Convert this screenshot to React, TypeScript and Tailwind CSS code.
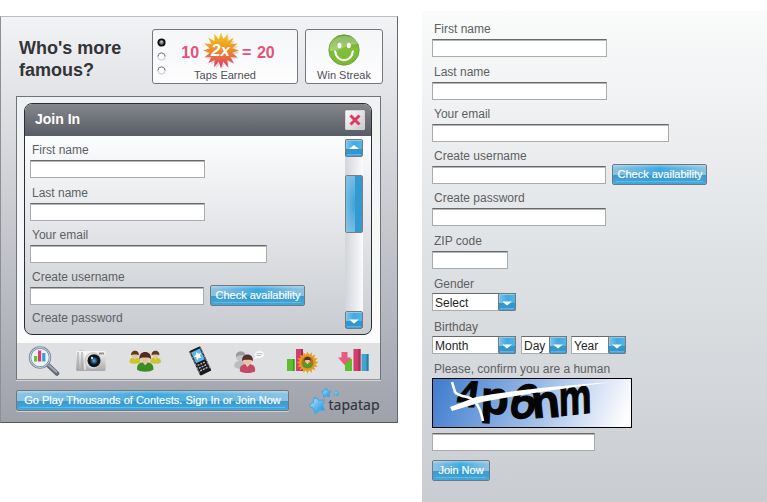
import React from "react";

const LABEL = "pl-[2px] h-[14px] text-[12px] leading-[14px] text-[#5e5f62] whitespace-nowrap";
const INPUT =
  "block h-[18px] bg-white border border-[#aaabad] border-t-[#68696c] outline-none rounded-none px-1 text-[12px] shadow-[inset_0_1px_0_#b5b6b8]";

function Field({
  label,
  width,
  className = "",
  action,
}: {
  label: string;
  width: string;
  className?: string;
  action?: string;
}) {
  return (
    <div className={`flex flex-col gap-[3px] ${className}`}>
      <div className={LABEL}>{label}</div>
      <div className="flex h-[18px] items-start gap-[6px]">
        <input className={`${INPUT} ${width}`} />
        {action && <BlueButton className="-mt-[2px] w-[95px] pl-px">{action}</BlueButton>}
      </div>
    </div>
  );
}

function BlueButton({ children, className = "" }: { children: React.ReactNode; className?: string }) {
  return (
    <button
      className={`relative flex h-[21px] shrink-0 items-center justify-center overflow-hidden rounded-[2px] border border-[#72777d] bg-linear-to-r from-[#8cc4e2] via-[#3aa9e0] to-[#8cc4e2] text-[11px] leading-[13px] whitespace-nowrap text-white ${className}`}
    >
      <span className="absolute inset-x-0 bottom-0 h-[9px] bg-linear-to-b from-[#3494ca]/90 to-[#39a7de]/90" />
      <span className="absolute inset-x-0 top-0 h-[3px] bg-linear-to-b from-white/35 to-white/0" />
      <span className="absolute inset-x-[3px] bottom-[2px] h-px bg-[#63b9e4]" />
      <span className="relative [-webkit-text-stroke:0.15px_#fff]">{children}</span>
    </button>
  );
}

function ArrowButton({ up = false }: { up?: boolean }) {
  return (
    <svg width="18" height="18" viewBox="0 0 18 18" className="block shrink-0">
      <defs>
        <linearGradient id="arrowFill" x1="0" y1="0" x2="1" y2="0">
          <stop offset="0" stopColor="#83c3e6" />
          <stop offset=".5" stopColor="#3eabe1" />
          <stop offset="1" stopColor="#58b4e2" />
        </linearGradient>
      </defs>
      <rect x=".5" y=".5" width="17" height="17" rx="1.5" fill="url(#arrowFill)" stroke="#75797e" />
      <path d="M1.5 15V1.5H16.5" fill="none" stroke="#8ecbea" />
      <rect x="1" y="10" width="16" height="7" fill="#3297ce" />
      <rect x="2" y="15" width="14" height="1.5" fill="#59b4e2" />
      <path d={up ? "M4 10L9 6L14 10Z" : "M4 8.500H14L9 12.500Z"} fill="#fff" />
    </svg>
  );
}

function Dropdown({ value, width }: { value: string; width: string }) {
  return (
    <div
      className={`flex h-[18px] items-center border border-r-0 border-[#aaabad] border-t-[#68696c] bg-white pl-[2px] text-[12px] leading-[14px] text-[#242424] ${width}`}
    >
      <span className="flex-1 pt-px whitespace-nowrap">{value}</span>
      <ArrowButton />
    </div>
  );
}

function burst(cx: number, cy: number, outer: number, inner: number, spikes: number, turn = 0) {
  return Array.from({ length: spikes * 2 }, (_, i) => {
    const a = (Math.PI * i) / spikes - Math.PI / 2 + turn;
    const r = i % 2 ? inner : outer;
    return `${(cx + r * Math.cos(a)).toFixed(2)},${(cy + r * Math.sin(a)).toFixed(2)}`;
  }).join(" ");
}

function MultiplierBurst() {
  return (
    <svg width="38" height="38" viewBox="0 0 38 38" className="block shrink-0">
      <defs>
        <linearGradient id="burstFill" x1="0" y1="0" x2="0" y2="1">
          <stop offset="0" stopColor="#f4cf17" />
          <stop offset=".5" stopColor="#f08a28" />
          <stop offset="1" stopColor="#dc3570" />
        </linearGradient>
      </defs>
      <polygon points={burst(20.5, 20.5, 17, 11, 16)} fill="#777" opacity=".25" />
      <polygon points={burst(19, 18.5, 18, 11.5, 16)} fill="url(#burstFill)" />
      <text x="18.5" y="24" textAnchor="middle" fontSize="17" fontWeight="700" fontStyle="italic" fill="#fff">
        2x
      </text>
    </svg>
  );
}

function Smiley() {
  return (
    <svg width="32" height="32" viewBox="0 0 32 32" className="block">
      <defs>
        <linearGradient id="smile" x1="0" y1="0" x2="0" y2="1">
          <stop offset="0" stopColor="#5f9c2a" />
          <stop offset=".45" stopColor="#83be3a" />
          <stop offset="1" stopColor="#7ab932" />
        </linearGradient>
      </defs>
      <circle cx="16" cy="16" r="15.200" fill="url(#smile)" stroke="#669e3a" strokeWidth=".8" />
      <path d="M1.500 17C1.500 7 8 2 16 2S29 5 30 10C21 10 10 18 1.500 17Z" fill="#fff" opacity=".28" />
      <ellipse cx="11.500" cy="11.500" rx="2" ry="2.800" fill="#fff" />
      <ellipse cx="20.800" cy="11.500" rx="2" ry="2.800" fill="#fff" />
      <path d="M7.200 17.500C8.500 29 23.500 29 24.800 17.500" fill="none" stroke="#fff" strokeWidth="2.200" strokeLinecap="round" />
    </svg>
  );
}

function RadioDot({ on = false }: { on?: boolean }) {
  return (
    <svg width="9" height="9" viewBox="0 0 9 9" className="block">
      {on ? (
        <>
          <circle cx="4.500" cy="4.500" r="3.200" fill="#777" stroke="#0c0c0c" strokeWidth="1.800" />
          <circle cx="4.500" cy="3.800" r="1.200" fill="#bbb" />
        </>
      ) : (
        <>
          <circle cx="4.500" cy="4.500" r="3.600" fill="#fff" stroke="#c4c4cb" />
          <path d="M.9 4.500A3.600 3.600 0 0 1 8.100 4.500" fill="none" stroke="#7d7d88" />
        </>
      )}
    </svg>
  );
}

function Icon({ children }: { children: React.ReactNode }) {
  return (
    <svg width="32" height="32" viewBox="0 0 32 32" className="block shrink-0">
      {children}
    </svg>
  );
}

function SearchChartIcon() {
  return (
    <Icon>
      <path d="M20 19L29 27.500" stroke="#666b76" strokeWidth="4.500" strokeLinecap="round" />
      <path d="M20 18.500L28.500 26" stroke="#a3a9b3" strokeWidth="1.700" strokeLinecap="round" />
      <circle cx="12" cy="11.500" r="10" fill="#e9f4fa" stroke="#7c8896" strokeWidth="2.400" />
      <circle cx="12" cy="11.500" r="10" fill="none" stroke="#c0d4df" strokeWidth="1" />
      <rect x="6" y="10" width="3.200" height="5.500" fill="#65c436" />
      <rect x="10" y="4.500" width="3.200" height="11" fill="#dd3a72" />
      <rect x="14.200" y="7" width="3.200" height="8.500" fill="#399fce" />
    </Icon>
  );
}

function CameraIcon() {
  return (
    <Icon>
      <defs>
        <linearGradient id="camBody" x1="0" y1="0" x2="0" y2="1">
          <stop offset="0" stopColor="#f7f7f7" />
          <stop offset="1" stopColor="#a9a9a9" />
        </linearGradient>
        <radialGradient id="lens">
          <stop offset="0" stopColor="#6fb4dd" />
          <stop offset=".4" stopColor="#1e5078" />
          <stop offset=".65" stopColor="#0a0d13" />
          <stop offset="1" stopColor="#17191e" />
        </radialGradient>
      </defs>
      <rect x="3" y="3.500" width="5" height="3" fill="#d2d2d2" />
      <rect x="0" y="5" width="29.500" height="20" rx="1.500" fill="url(#camBody)" />
      <path d="M2 6V24M6 6V24" stroke="#a0a0a0" strokeWidth="1" />
      <path d="M9 6V24" stroke="#fff" />
      <rect x="23" y="6.500" width="5" height="2" fill="#99928a" />
      <circle cx="17" cy="14.700" r="8" fill="#ddd" stroke="#c5c5c5" />
      <circle cx="18" cy="14.700" r="6.500" fill="url(#lens)" />
      <circle cx="16" cy="12" r="1.200" fill="#bfd9e8" />
    </Icon>
  );
}

function Person({ x, y, s, hair, shirt }: { x: number; y: number; s: number; hair: string; shirt: string }) {
  return (
    <g transform={`translate(${x} ${y}) scale(${s})`}>
      <path d="M-8 17C-8.500 11-5 9.500 0 9.500S8.500 11 8 17C5 19.500-5 19.500-8 17Z" fill={shirt} />
      <path d="M-3 9L0 12.500L3 9Z" fill="#f3d1ad" />
      <ellipse cx="0" cy="5.500" rx="4.500" ry="4.800" fill="#e9c3a2" />
      <path d="M-5.500 6.800C-7.500-3 7.500-3 5.500 6.800C5 5 3 5 0 5S-5 5-5.500 6.800Z" fill={hair} />
    </g>
  );
}

function PeopleIcon() {
  return (
    <Icon>
      <Person x={6} y={5} s={0.68} hair="#62391c" shirt="#c9c72b" />
      <Person x={26.500} y={5} s={0.68} hair="#62391c" shirt="#c9c72b" />
      <Person x={16.200} y={6.500} s={1.02} hair="#532b25" shirt="#3c8d25" />
    </Icon>
  );
}

function PhoneIcon() {
  return (
    <Icon>
      <g transform="rotate(-25 16 15)">
        <rect x="10" y="1.500" width="12.500" height="27" rx="1.500" fill="#17191d" />
        <path d="M10.500 3V27M22 3V27" stroke="#a9a9ac" strokeWidth=".8" strokeDasharray="3 1" />
        <rect x="11.500" y="3.500" width="9.500" height="12" fill="#62b6e7" />
        <polygon points={burst(16.200, 9.500, 4.300, 2.100, 5)} fill="#fff" />
        <path d="M12 18H20.500M12 21H20.500M12 24H20.500" stroke="#b9b9bb" strokeWidth="1.400" strokeDasharray="2 1" />
      </g>
    </Icon>
  );
}

function ChatIcon() {
  return (
    <Icon>
      <ellipse cx="6.500" cy="10.500" rx="4.500" ry="5" fill="#c3c4c5" />
      <path d="M.5 21C-.5 16 3 15 7 15S12 17 12 22C8 24 3 23 .5 21Z" fill="#bbbcbe" />
      <path d="M2 11C1 4 12 4 11.500 10C8 9 5 9 2 11Z" fill="#9a9b9d" />
      <Person x={13.500} y={9} s={0.95} hair="#55302b" shirt="#c54866" />
      <ellipse cx="25.500" cy="8.500" rx="4.700" ry="3.600" fill="#f8f8f8" />
      <path d="M22 10.500L19.500 13L25 12Z" fill="#f8f8f8" />
      <path d="M22.500 7.700H28.500M22.500 9.500H27" stroke="#b0b0b0" strokeWidth=".8" />
    </Icon>
  );
}

function FameChartIcon() {
  return (
    <Icon>
      <rect x="0" y="13" width="7.500" height="12" fill="#5cc02a" />
      <path d="M6 13H7.500V25H6Z" fill="#3f961d" />
      <rect x="9" y="3" width="7" height="22" fill="#d23d6c" />
      <path d="M14 3H16V25H14Z" fill="#a72e55" />
      <polygon points={burst(20.5, 16.5, 11, 7.8, 16)} fill="#e59b20" />
      <circle cx="20.500" cy="16.500" r="6" fill="#ad6f22" />
      <Person x={20.500} y={11} s={0.58} hair="#55351e" shirt="#4d9e2b" />
    </Icon>
  );
}

function RankingIcon() {
  return (
    <Icon>
      <rect x="7" y="13" width="7" height="12" fill="#5cc02a" />
      <rect x="15.500" y="3" width="7" height="22" fill="#d23d6c" />
      <path d="M20.500 3H22.500V25H20.500Z" fill="#a72e55" />
      <rect x="23.500" y="8" width="7" height="17" fill="#3fa6d0" />
      <path d="M28.500 8H30.500V25H28.500Z" fill="#2b7ea3" />
      <path d="M3.500 6H9.500V11.500H13.500L6.500 19L0 11.500H3.500Z" fill="#ec5a80" />
    </Icon>
  );
}

function Logo() {
  return (
    <svg width="74" height="30" viewBox="0 0 74 30" className="block shrink-0">
      <defs>
        <linearGradient id="star" x1="0" y1="0" x2="1" y2="1">
          <stop offset="0" stopColor="#e1f3fd" />
          <stop offset=".45" stopColor="#6cbff0" />
          <stop offset="1" stopColor="#1f86d2" />
        </linearGradient>
      </defs>
      <g fill="url(#star)" stroke="#4fa8e0" strokeLinejoin="round" strokeWidth="1.200">
        <polygon points={burst(8.5, 18.3, 8.8, 5.2, 5, -0.35)} />
        <polygon points={burst(17.3, 6, 5, 2.9, 5, -0.05)} />
        <polygon points={burst(27.3, 6.5, 2.7, 1.6, 5, 0.25)} strokeWidth=".8" />
      </g>
      <text
        x="19.500"
        y="23"
        fontFamily="'Noto Sans', 'Open Sans', sans-serif"
        fontSize="14"
        fontWeight="400"
        fill="#333539"
        stroke="#333539"
        strokeWidth=".15"
        textLength="51"
      >
        tapatap
      </text>
    </svg>
  );
}

function Captcha() {
  return (
    <svg width="200" height="50" viewBox="0 0 200 50" className="block overflow-visible">
      <defs>
        <linearGradient id="captchaBg" x1="0" y1=".4" x2="1" y2=".5">
          <stop offset="0" stopColor="#4480cf" />
          <stop offset=".55" stopColor="#a1bfe8" />
          <stop offset="1" stopColor="#fdfdff" />
        </linearGradient>
      </defs>
      <rect x=".5" y=".5" width="199" height="49" fill="url(#captchaBg)" stroke="#000" />
      <g
        fill="#050505"
        stroke="#050505"
        strokeWidth="1.200"
        fontFamily="'Liberation Sans', Arial, sans-serif"
        fontWeight="700"
      >
        <text transform="translate(24 29) skewX(-8) scale(1.050 1)" fontSize="37">4</text>
        <text transform="translate(48 35) rotate(3)" fontSize="46">p</text>
        <text transform="translate(75 39) rotate(2) skewX(-12)" fontSize="47" fontWeight="400" strokeWidth="2.500">6</text>
        <text transform="translate(101 40) rotate(-3) skewX(3)" fontSize="46">n</text>
        <text transform="translate(127 38) rotate(-6) skewX(-5) scale(.74 1)" fontSize="50">m</text>
      </g>
      <path d="M18 29L44 19Q92 10 181 4Q108 13 50 24L20 33Z" fill="#fff" />
      <path d="M20 4L23 14Q25 17 35 19Q47 22 51 43" fill="none" stroke="#fff" strokeWidth="2.600" />
    </svg>
  );
}

function Dialog() {
  return (
    <div className="flex h-[232px] w-[348px] flex-col overflow-hidden rounded-[8px] border border-[#2d2e32] bg-linear-to-b from-[#fbfcfd] from-15% to-[#c8cbd0]">
      <div className="flex h-[32px] shrink-0 items-center justify-between bg-linear-to-b from-[#85878b] to-[#575d65] pr-[6px] pb-[2px] pl-[10px]">
        <span className="text-[14px] leading-[16px] font-bold text-white">Join In</span>
        <button className="mt-px flex size-[20px] items-center justify-center rounded-[1px] border border-[#d3d4d7] bg-linear-to-br from-[#fcfcfc] to-[#c9cacc]">
          <svg width="12" height="12" viewBox="0 0 12 12" className="shrink-0">
            <path d="M1.500 1.500L10.500 10.500M10.500 1.500L1.500 10.500" stroke="#de3a68" strokeWidth="3" />
          </svg>
        </button>
      </div>
      <div className="flex min-h-0 flex-1 justify-between pr-[8px] pl-[5px]">
        <div className="flex flex-col pt-[7px]">
          <Field label="First name" width="w-[175px]" />
          <Field label="Last name" width="w-[175px]" className="mt-[8px]" />
          <Field label="Your email" width="w-[237px]" className="mt-[7px]" />
          <Field label="Create username" width="w-[174px]" className="mt-[7px]" action="Check availability" />
          <div className={`mt-[6px] ${LABEL}`}>Create password</div>
        </div>
        <div className="mt-[3px] flex h-[190px] w-[18px] flex-col bg-linear-to-r from-[#d2d5d9] to-[#fbfbfc]">
          <ArrowButton up />
          <div className="mt-[18px] h-[58px] rounded-[2px] border border-[#7a7e84] bg-radial from-[#3aa6dc] to-[#8cc6e6]">
            <div className="ml-auto h-full w-[7px] bg-[#3399d0]" />
          </div>
          <div className="mt-auto">
            <ArrowButton />
          </div>
        </div>
      </div>
    </div>
  );
}

function Widget() {
  return (
    <section className="mt-[16px] flex h-[407px] w-[398px] shrink-0 flex-col border border-[#55585e] border-t-[#b9bec4] border-r-[#63666d] border-l-[#8b8f96] bg-linear-to-b from-[#f2f3f5] to-[#9fa2ab] pl-[15px]">
      <div className="flex h-[79px] pt-[12px]">
        <h1 className="w-[136px] pt-[8px] pl-[3px] text-[18px] leading-[22px] font-bold text-[#333436]">
          Who's more
          <br />
          famous?
        </h1>
        <div className="flex h-[55px] w-[146px] rounded-[3px] border border-[#75787e] bg-linear-to-b from-[#f5f6f8] to-[#fdfdfe] pl-[4px]">
          <div className="flex flex-col gap-[5px] pt-[8px]">
            <RadioDot on />
            <RadioDot />
            <RadioDot />
          </div>
          <div className="flex w-[118px] flex-col items-center pt-[3px]">
            <div className="flex h-[36px] items-center pl-[6px] text-[16px] leading-[18px] font-bold whitespace-nowrap text-[#e4527b]">
              <span className="pr-[3px] pt-[4px]">10</span>
              <MultiplierBurst />
              <span className="pl-[2px] pt-[4px] [word-spacing:1px]">= 20</span>
            </div>
            <span className="text-[11px] leading-[13px] text-[#505155]">Taps Earned</span>
          </div>
        </div>
        <div className="ml-[7px] flex h-[55px] w-[78px] flex-col items-center rounded-[3px] border border-[#75787e] bg-linear-to-b from-[#f5f6f8] to-[#fdfdfe] pt-[4px]">
          <Smiley />
          <span className="mt-[3px] text-[11px] leading-[13px] text-[#505155]">Win Streak</span>
        </div>
      </div>
      <div className="h-[284px] w-[365px] border border-[#6f737b] border-b-[#93959a] bg-linear-to-b from-[#eff1f3] to-[#fdfdfd] shadow-[0_1px_0_#d3d5d8]">
        <div className="h-[246px] pt-[6px] pl-[7px]">
          <Dialog />
        </div>
        <nav className="flex h-[36px] bg-[#dfe0e1] pt-[3px] pl-[11px]">
          <SearchChartIcon />
          <div className="ml-[16px]"><CameraIcon /></div>
          <div className="ml-[21px]"><PeopleIcon /></div>
          <div className="ml-[23px]"><PhoneIcon /></div>
          <div className="ml-[18px]"><ChatIcon /></div>
          <div className="ml-[21px]"><FameChartIcon /></div>
          <div className="ml-[19px]"><RankingIcon /></div>
        </nav>
      </div>
      <div className="flex pt-[7px]">
        <BlueButton className="mt-[3px] w-[273px] shadow-[0_1px_0_#d0d2d5]">
          Go Play Thousands of Contests. Sign In or Join Now
        </BlueButton>
        <div className="ml-[20px]">
          <Logo />
        </div>
      </div>
    </section>
  );
}

function FullForm() {
  return (
    <section className="mt-[11px] ml-[24px] flex h-[491px] w-[345px] flex-col bg-linear-to-b from-[#fafbfb] via-[#dfe2e5] to-[#c9cdd1] pt-[11px] pl-[10px]">
      <Field label="First name" width="w-[175px]" />
      <Field label="Last name" width="w-[175px]" className="mt-[8px]" />
      <Field label="Your email" width="w-[237px]" className="mt-[7px]" />
      <Field label="Create username" width="w-[174px]" className="mt-[7px]" action="Check availability" />
      <Field label="Create password" width="w-[174px]" className="mt-[7px]" />
      <Field label="ZIP code" width="w-[76px]" className="mt-[8px]" />
      <div className="mt-[8px] flex flex-col gap-[2px]">
        <div className={LABEL}>Gender</div>
        <Dropdown value="Select" width="w-[84px]" />
      </div>
      <div className="mt-[9px] flex flex-col gap-[2px]">
        <div className={LABEL}>Birthday</div>
        <div className="flex">
          <Dropdown value="Month" width="w-[84px]" />
          <div className="ml-[5px]"><Dropdown value="Day" width="w-[46px]" /></div>
          <div className="ml-[4px]"><Dropdown value="Year" width="w-[55px]" /></div>
        </div>
      </div>
      <div className={`mt-[8px] ${LABEL}`}>Please, confirm you are a human</div>
      <div className="mt-[2px]">
        <Captcha />
      </div>
      <input className={`mt-[5px] w-[163px] ${INPUT}`} />
      <BlueButton className="mt-[9px] w-[58px]">Join Now</BlueButton>
    </section>
  );
}

export default function App() {
  return (
    <main className="flex h-[502px] w-[767px] overflow-hidden bg-white font-['Liberation_Sans',Arial,sans-serif]">
      <Widget />
      <FullForm />
    </main>
  );
}
